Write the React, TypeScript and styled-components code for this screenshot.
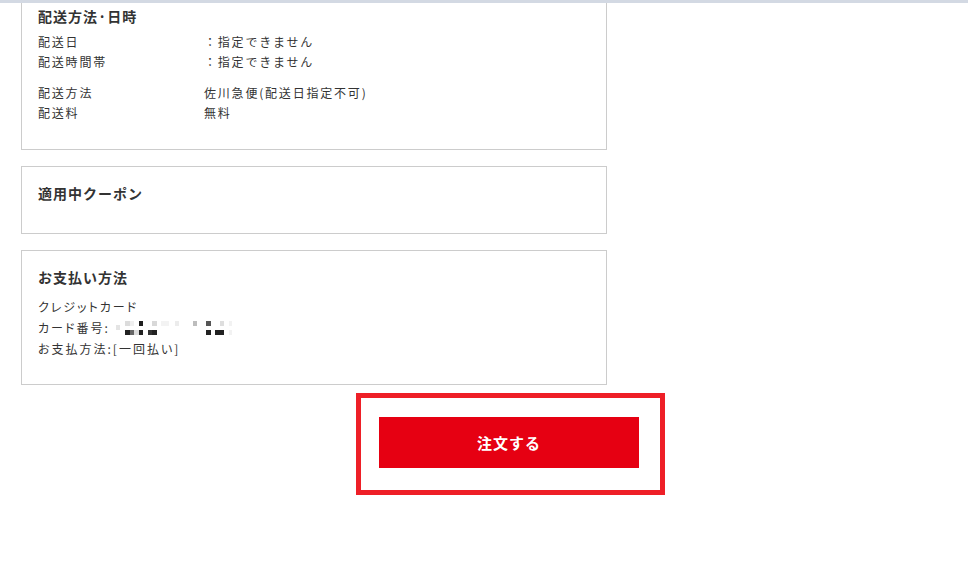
import styled, { createGlobalStyle } from 'styled-components'

const GlobalStyle = createGlobalStyle`
  html, body {
    margin: 0;
    padding: 0;
    background: #fff;
  }
  body {
    font-family: 'Noto Sans CJK JP', 'Noto Sans', sans-serif;
    color: #333;
  }
`

// masked card number: blocks of [x, y, w, colour]
const maskBlocks: [number, number, number, string][] = [
  [0, 4, 4, '#e4e4e4'],
  [9, 0, 5, '#dcdcdc'],
  [14, 0, 4, '#efefef'],
  [23, 0, 4, '#1e1e1e'],
  [36, 0, 5, '#d8d8d8'],
  [45, 0, 8, '#f3f3f3'],
  [59, 0, 4, '#ececec'],
  [77, 0, 4, '#bdbdbd'],
  [90, 0, 5, '#555'],
  [104, 0, 4, '#dedede'],
  [113, 0, 3, '#f2f2f2'],
  [9, 9, 5, '#222'],
  [14, 9, 4, '#666'],
  [18, 9, 5, '#dcdcdc'],
  [23, 9, 4, '#222'],
  [32, 9, 4, '#333'],
  [36, 9, 5, '#222'],
  [90, 9, 5, '#222'],
  [99, 9, 9, '#222'],
  [113, 9, 3, '#f2f2f2']
]

const App = () => {
  return (
    <Page>
      <GlobalStyle />
      <TopStrip />
      <Column>
        <Card clipped>
          <CardTitle>配送方法·日時</CardTitle>
          <InfoGroup>
            <InfoRow>
              <Label>配送日</Label>
              <Value>：指定できません</Value>
            </InfoRow>
            <InfoRow>
              <Label>配送時間帯</Label>
              <Value>：指定できません</Value>
            </InfoRow>
          </InfoGroup>
          <InfoGroup>
            <InfoRow>
              <Label>配送方法</Label>
              <Value>佐川急便(配送日指定不可)</Value>
            </InfoRow>
            <InfoRow>
              <Label>配送料</Label>
              <Value>無料</Value>
            </InfoRow>
          </InfoGroup>
        </Card>

        <Card>
          <CardTitle>適用中クーポン</CardTitle>
        </Card>

        <Card tall>
          <CardTitle>お支払い方法</CardTitle>
          <PayList>
            <PayLine>クレジットカード</PayLine>
            <PayLine>
              カード番号:
              <Mask width="118" height="15" viewBox="0 0 118 15">
                {maskBlocks.map(([x, y, w, c], i) => (
                  <rect key={i} x={x} y={y} width={w} height={5} fill={c} />
                ))}
              </Mask>
            </PayLine>
            <PayLine>お支払方法:[一回払い]</PayLine>
          </PayList>
        </Card>
      </Column>

      <OrderArea>
        <Highlight>
          <OrderButton>注文する</OrderButton>
        </Highlight>
      </OrderArea>
    </Page>
  )
}

export default App

const Page = styled.div`
  width: 968px;
  height: 588px;
  overflow: hidden;
`

const TopStrip = styled.div`
  height: 3px;
  background: #d3d9e3;
`

const Column = styled.div`
  width: 586px;
  margin-left: 21px;
  display: flex;
  flex-direction: column;
  gap: 16px;
`

const Card = styled.section<{ clipped?: boolean; tall?: boolean }>`
  border: 1px solid #cccccc;
  border-top: ${(p) => (p.clipped ? 'none' : '1px solid #cccccc')};
  padding: ${(p) => (p.clipped ? '2px 16px 26px' : '15px 16px 0')};
  height: ${(p) => (p.clipped ? 'auto' : p.tall ? '135px' : '68px')};
  box-sizing: border-box;
`

const CardTitle = styled.h2`
  margin: 0 0 5px;
  font-size: 14px;
  line-height: 22px;
  font-weight: 700;
  letter-spacing: 1px;
  color: #333;
`

const InfoGroup = styled.div`
  margin-bottom: 11px;

  &:last-child {
    margin-bottom: 0;
  }
`

const InfoRow = styled.div`
  display: flex;
  font-size: 12px;
  line-height: 20px;
  letter-spacing: 1.8px;
  color: #333;
`

const Label = styled.span`
  width: 166px;
  flex-shrink: 0;
`

const Value = styled.span``

const PayList = styled.div`
  padding-top: 3px;
`

const PayLine = styled.div`
  display: flex;
  align-items: center;
  font-size: 12px;
  line-height: 21px;
  letter-spacing: 2px;
  font-feature-settings: 'palt';
  color: #333;
`

const Mask = styled.svg`
  margin-left: 6px;
  margin-top: 1px;
`

const OrderArea = styled.div`
  padding: 8px 0 0 356px;
`

const Highlight = styled.div`
  width: 309px;
  height: 102px;
  box-sizing: border-box;
  border: 5px solid #ee1f27;
  padding: 19px 0 0 18px;
`

const OrderButton = styled.button`
  display: block;
  width: 260px;
  height: 51px;
  border: none;
  background: #e60012;
  color: #fff;
  font-family: 'Noto Sans CJK JP', sans-serif;
  font-size: 15px;
  font-weight: 700;
  letter-spacing: 1px;
  cursor: pointer;
`
